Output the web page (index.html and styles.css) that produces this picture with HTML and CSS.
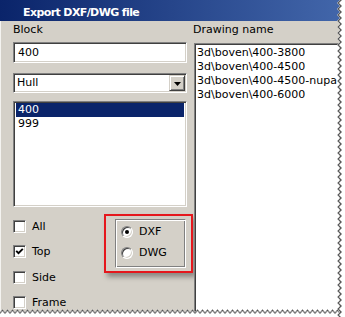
FILE: index.html
```html
<!DOCTYPE html>
<html>
<head>
<meta charset="utf-8">
<link rel="stylesheet" href="styles.css">
</head>
<body>
<div class="shot">
  <div class="window">
    <div class="titlebar">Export DXF/DWG file</div>
    <div class="body">
      <div class="left">
        <div class="label">Block</div>
        <div class="textbox">400</div>
        <div class="combo">
          <span class="combo-text">Hull</span>
          <span class="combo-btn"><svg width="7" height="4" viewBox="0 0 7 4"><path d="M0 0H7L3.5 4Z" fill="#000"/></svg></span>
        </div>
        <div class="listbox">
          <div class="item sel">400</div>
          <div class="item">999</div>
        </div>
        <div class="bottom">
          <div class="checks">
            <div class="check"><span class="box"></span>All</div>
            <div class="check"><span class="box"><svg width="9" height="9" viewBox="0 0 9 9"><path d="M1.2 3.8L3.5 6.2L7.8 1.8" fill="none" stroke="#000" stroke-width="1.9"/></svg></span>Top</div>
            <div class="check"><span class="box"></span>Side</div>
            <div class="check"><span class="box"></span>Frame</div>
          </div>
          <div class="highlight">
            <div class="group">
              <div class="radio"><span class="circle on"></span>DXF</div>
              <div class="radio"><span class="circle"></span>DWG</div>
            </div>
          </div>
        </div>
      </div>
      <div class="right">
        <div class="label label-right">Drawing name</div>
        <div class="drawlist">
          <div>3d\boven\400-3800</div>
          <div>3d\boven\400-4500</div>
          <div>3d\boven\400-4500-nupa</div>
          <div>3d\boven\400-6000</div>
        </div>
      </div>
    </div>
  </div>
  <svg class="edges" width="345" height="317" viewBox="0 0 345 317">
    <defs>
      <pattern id="rz" patternUnits="userSpaceOnUse" x="334" y="0" width="11" height="6">
        <polygon points="6,0 3,3 6,6 11,6 11,0" fill="#fff"/>
        <polyline points="7,0 4,3 7,6" fill="none" stroke="#555" stroke-width="1.1"/>
        <polyline points="8,0 5,3 8,6" fill="none" stroke="#b0b0b0" stroke-width="1"/>
      </pattern>
      <pattern id="bz" patternUnits="userSpaceOnUse" x="0" y="308" width="5" height="9">
        <polygon points="0,4 2.5,1 5,4 5,9 0,9" fill="#fff"/>
        <polyline points="0,5 2.5,2 5,5" fill="none" stroke="#555" stroke-width="1.1"/>
        <polyline points="0,6 2.5,3 5,6" fill="none" stroke="#b0b0b0" stroke-width="1"/>
      </pattern>
    </defs>
    <rect x="0" y="308" width="345" height="9" fill="url(#bz)"/>
    <rect x="334" y="0" width="11" height="317" fill="url(#rz)"/>
  </svg>
</div>
</body>
</html>
```
FILE: styles.css
```css
html, body {
  margin: 0;
  padding: 0;
  background: #fff;
}

.shot {
  position: relative;
  width: 345px;
  height: 317px;
  overflow: hidden;
  background: #fff;
}

.window {
  width: 341px;
  height: 314px;
  background: #d4d0c8;
  display: flex;
  flex-direction: column;
  font: 11px "DejaVu Sans", sans-serif;
  color: #000;
}

.titlebar {
  height: 21px;
  box-sizing: border-box;
  padding: 4px 0 0 23px;
  line-height: 17px;
  background: linear-gradient(to right, #0a246a 0, #4266aa 341px);
  color: #fff;
  font-weight: bold;
  font-size: 11px;
  letter-spacing: -0.6px;
  white-space: nowrap;
}

.body {
  flex: 1;
  min-height: 0;
  display: grid;
  grid-template-columns: 193px 1fr;
  border-left: 1px solid #f4f3f0;
}

.left {
  padding: 2px 0 0 12px;
}

.label {
  height: 13px;
  line-height: 13px;
}

.textbox,
.combo,
.listbox,
.drawlist {
  box-sizing: border-box;
  background: #fff;
  border: 1px solid;
  border-color: #808080 #fff #fff #808080;
  box-shadow: inset 1px 1px #404040, inset -1px -1px #d4d0c8;
}

.textbox {
  margin-top: 6px;
  width: 174px;
  height: 21px;
  padding: 0 0 0 4px;
  line-height: 19px;
}

.combo {
  margin-top: 10px;
  width: 174px;
  height: 20px;
  display: flex;
  align-items: center;
  padding: 1px 1px 1px 3px;
}

.combo-text {
  flex: 1;
  line-height: 16px;
}

.combo-btn {
  width: 16px;
  height: 16px;
  box-sizing: border-box;
  background: #d4d0c8;
  border: 1px solid;
  border-color: #d4d0c8 #404040 #404040 #d4d0c8;
  box-shadow: inset 1px 1px #fff, inset -1px -1px #808080;
  display: flex;
  align-items: center;
  justify-content: center;
  padding-top: 1px;
}

.listbox {
  margin-top: 8px;
  width: 174px;
  height: 106px;
  padding: 1px 2px;
}

.item {
  height: 14px;
  line-height: 14px;
  padding-left: 2px;
}

.item.sel {
  background: #0a246a;
  color: #fff;
}

.bottom {
  margin-top: 7px;
  display: flex;
}

.checks {
  width: 91px;
  padding-top: 6px;
  display: flex;
  flex-direction: column;
  gap: 12.33px;
}

.check {
  height: 13px;
  display: flex;
  align-items: center;
  gap: 6px;
  line-height: 13px;
}

.box {
  width: 13px;
  height: 13px;
  box-sizing: border-box;
  background: #fff;
  border: 1px solid;
  border-color: #808080 #fff #fff #808080;
  box-shadow: inset 1px 1px #404040, inset -1px -1px #d4d0c8;
  display: flex;
  align-items: center;
  justify-content: center;
}

.highlight {
  width: 89px;
  height: 59px;
  box-sizing: border-box;
  border: 2px solid #e5171d;
  box-shadow: 3px 4px 5px rgba(0, 0, 0, 0.35);
  padding: 3px 5px 3px 9px;
}

.group {
  height: 100%;
  box-sizing: border-box;
  border: 1px solid;
  border-color: #808080 #fff #fff #808080;
  box-shadow: inset 1px 1px #fff, inset -1px -1px #808080;
  padding: 6px 0 0 5px;
  display: flex;
  flex-direction: column;
  gap: 9px;
}

.radio {
  height: 12px;
  display: flex;
  align-items: center;
  gap: 6px;
  line-height: 12px;
}

.circle {
  width: 12px;
  height: 12px;
  box-sizing: border-box;
  border-radius: 50%;
  background: #fff;
  border: 1px solid;
  border-color: #808080 #fff #fff #808080;
  box-shadow: inset 1px 1px #404040, inset -1px -1px #d4d0c8;
  display: flex;
  align-items: center;
  justify-content: center;
}

.circle.on::after {
  content: "";
  width: 4px;
  height: 4px;
  border-radius: 50%;
  background: #000;
}

.right {
  padding-top: 2px;
  display: flex;
  flex-direction: column;
  min-height: 0;
}

.label-right {
  margin-left: -1px;
}

.drawlist {
  margin-top: 7px;
  flex: 1;
  padding: 2px 0 0 2px;
  line-height: 14px;
  white-space: nowrap;
  overflow: hidden;
}

.edges {
  position: absolute;
  left: 0;
  top: 0;
  pointer-events: none;
}
```
